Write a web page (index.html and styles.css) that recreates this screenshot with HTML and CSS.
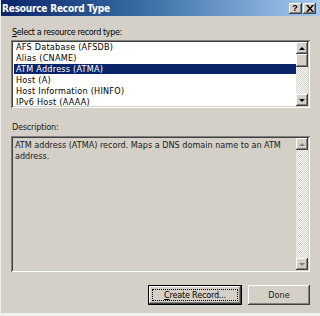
FILE: index.html
```html
<!DOCTYPE html>
<html>
<head>
<meta charset="utf-8">
<link rel="stylesheet" href="styles.css">
</head>
<body>
<div class="window">
  <div class="titlebar">
    <span class="title">Resource Record Type</span>
    <div class="tbtns">
      <span class="tbtn help">?</span>
      <span class="tbtn close"><svg width="8" height="7" viewBox="0 0 8 7"><path d="M0 0h2l2 2.5L6 0h2L5 3.5 8 7H6L4 4.5 2 7H0l3-3.5z" fill="#000"/></svg></span>
    </div>
  </div>
  <div class="content">
    <div class="label first"><u>S</u>elect a resource record type:</div>
    <div class="field list">
      <div class="items">
        <div class="item">AFS Database (AFSDB)</div>
        <div class="item">Alias (CNAME)</div>
        <div class="item sel">ATM Address (ATMA)</div>
        <div class="item">Host (A)</div>
        <div class="item">Host Information (HINFO)</div>
        <div class="item">IPv6 Host (AAAA)</div>
      </div>
      <div class="vscroll">
        <div class="sbtn"><span class="arr up"></span></div>
        <div class="thumb"></div>
        <div class="track"></div>
        <div class="sbtn"><span class="arr down"></span></div>
      </div>
    </div>
    <div class="label second">Description:</div>
    <div class="field desc">
      <div class="desctext">ATM address (ATMA) record. Maps a DNS domain name to an ATM address.</div>
      <div class="vscroll">
        <div class="sbtn"><span class="arr up dis"></span></div>
        <div class="track"></div>
        <div class="sbtn"><span class="arr down dis"></span></div>
      </div>
    </div>
    <div class="buttons">
      <div class="btn default"><span class="focus"><u>C</u>reate Record...</span></div>
      <div class="btn done">Done</div>
    </div>
  </div>
</div>
</body>
</html>
```
FILE: styles.css
```css
* { box-sizing: border-box; }
html, body { margin: 0; padding: 0; }
body {
  width: 320px;
  height: 316px;
  overflow: hidden;
  background: #d4d0c8;
  font-family: "DejaVu Sans Condensed", "Liberation Sans", Arial, sans-serif;
  font-size: 9px;
  color: #000;
}
.window {
  width: 320px;
  height: 316px;
  display: flex;
  flex-direction: column;
  background: #d4d0c8;
  border-left: 1px solid #eeece8;
  border-bottom: 3px solid #f2f0ec;
}
.titlebar {
  height: 16px;
  flex: none;
  display: flex;
  align-items: center;
  justify-content: space-between;
  background: linear-gradient(to right, #0a246a 0%, #3a6ea5 45%, #a6caf0 100%);
  padding: 0 4px 0 1px;
}
.title {
  color: #fff;
  font-weight: bold;
  font-size: 10px;
  letter-spacing: -0.2px;
}
.tbtns { display: flex; gap: 1px; margin-top: 1px; }
.tbtn {
  width: 13px;
  height: 11px;
  background: #d4d0c8;
  box-shadow: inset -1px -1px #404040, inset 1px 1px #fff, inset -2px -2px #808080;
  display: flex;
  align-items: center;
  justify-content: center;
  font-family: "Liberation Sans", Arial, sans-serif;
  font-weight: bold;
  font-size: 9px;
  line-height: 11px;
}
.help { padding-right: 1px; }
.content {
  flex: 1;
  display: flex;
  flex-direction: column;
  padding: 0 10px 0 10px;
}
.label {
  height: 12px;
  line-height: 12px;
  padding-left: 1px;
}
.label.first { margin-top: 10px; margin-bottom: 2px; letter-spacing: -0.4px; }
.label.second { margin-top: 13px; margin-bottom: 3px; color: #202020; letter-spacing: -0.2px; }
.field {
  display: flex;
  padding: 2px;
  box-shadow: inset 1px 1px #808080, inset -1px -1px #fff, inset 2px 2px #404040, inset -2px -2px #d4d0c8;
}
.list { height: 68px; background: #fff; }
.items { flex: 1; overflow: hidden; padding-left: 1px; }
.item {
  height: 11px;
  line-height: 11px;
  padding-left: 2px;
  white-space: nowrap;
  letter-spacing: 0.25px;
}
.item.sel { background: #0a246a; color: #fff; height: 10px; line-height: 10px; margin-bottom: 1px; }
.vscroll {
  width: 12px;
  flex: none;
  display: flex;
  flex-direction: column;
}
.sbtn, .thumb {
  height: 12px;
  flex: none;
  background: #d4d0c8;
  box-shadow: inset -1px -1px #404040, inset 1px 1px #fff, inset -2px -2px #808080;
  display: flex;
  align-items: center;
  justify-content: center;
}
.thumb { height: 13px; }
.track {
  flex: 1;
  background: repeating-conic-gradient(#d4d0c8 0 25%, #fff 0 50%) 0 0 / 2px 2px;
}
.arr { width: 0; height: 0; border-left: 3px solid transparent; border-right: 3px solid transparent; }
.arr.up { border-bottom: 3px solid #000; }
.arr.down { border-top: 3px solid #000; }
.arr.up.dis { border-bottom-color: #808080; }
.arr.down.dis { border-top-color: #808080; }
.desc { height: 136px; background: #d4d0c8; }
.desctext {
  flex: 1;
  padding: 2px 2px 0 2px;
  line-height: 11px;
  color: #202020;
}
.buttons {
  margin-top: 13px;
  display: flex;
  justify-content: flex-end;
  gap: 6px;
}
.btn {
  height: 20px;
  background: #d4d0c8;
  display: flex;
  align-items: center;
  justify-content: center;
  box-shadow: inset -1px -1px #404040, inset 1px 1px #fff, inset -2px -2px #808080;
}
.btn.default {
  width: 94px;
  box-shadow: inset 0 0 0 1px #000, inset -2px -2px #404040, inset 2px 2px #fff, inset -3px -3px #808080;
  padding: 4px;
  letter-spacing: -0.2px;
}
.focus {
  flex: 1;
  align-self: stretch;
  display: flex;
  align-items: center;
  justify-content: center;
  border: 1px dotted #000;
}
.btn.done { width: 62px; color: #202020; }
```
